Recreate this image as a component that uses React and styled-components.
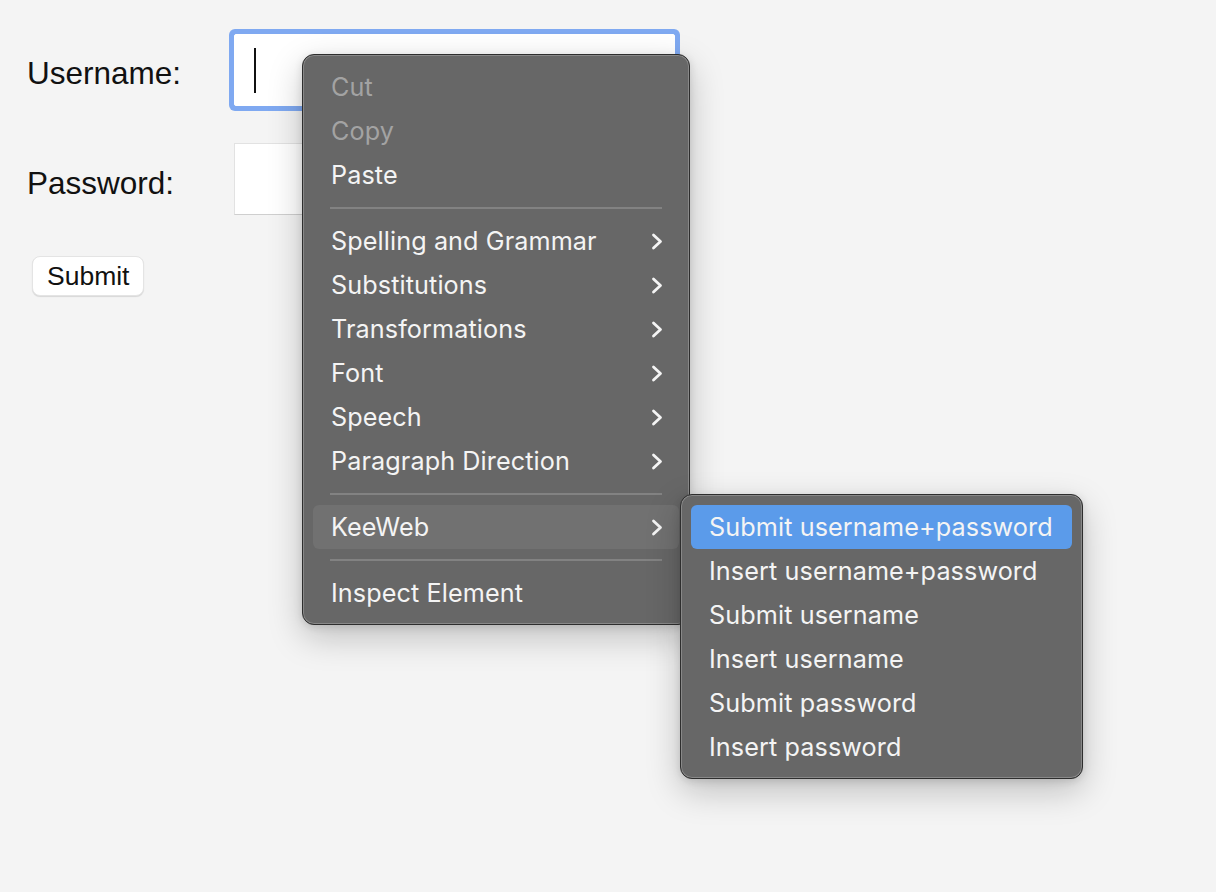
import React from 'react'
import styled, { createGlobalStyle } from 'styled-components'

const GlobalStyle = createGlobalStyle`
    html, body {
        margin: 0;
        padding: 0;
        background: #f4f4f4;
    }
    body {
        width: 1216px;
        height: 892px;
        overflow: hidden;
        font-family: "Liberation Sans", Arial, sans-serif;
    }
`

const Page = styled.div`
    position: relative;
    width: 1216px;
    height: 892px;
`

const Form = styled.div`
    display: flex;
    flex-direction: column;
    padding: 34px 0 0 27px;
`

const Row = styled.div`
    display: flex;
    align-items: center;
    margin-bottom: ${(p) => p.gap}px;
`

const Label = styled.div`
    width: 207px;
    font-size: 31.5px;
    color: #111;
    margin-top: ${(p) => p.shift || 0}px;
`

const Field = styled.div`
    display: flex;
    align-items: center;
    box-sizing: border-box;
    width: 441px;
    height: 72px;
    background: #fff;
    border: 1px solid ${(p) => (p.focused ? '#fff' : '#e2e2e2')};
    border-bottom-color: ${(p) => (p.focused ? '#fff' : '#cfcfcf')};
    border-radius: ${(p) => (p.focused ? '2px' : '0')};
    box-shadow: ${(p) => (p.focused ? '0 0 0 5px #7fa9f1' : 'none')};
    padding-left: 19px;
`

const Caret = styled.span`
    width: 2px;
    height: 45px;
    background: #111;
`

const SubmitButton = styled.button`
    align-self: flex-start;
    margin-left: 5px;
    height: 40px;
    padding: 0 14px;
    background: #fff;
    border: 1px solid #e4e4e4;
    border-radius: 8px;
    box-shadow: 0 1px 1px rgba(0, 0, 0, 0.12);
    font-family: "Liberation Sans", Arial, sans-serif;
    font-size: 26.5px;
    color: #111;
`

const Menu = styled.div`
    position: absolute;
    left: ${(p) => p.x}px;
    top: ${(p) => p.y}px;
    width: ${(p) => p.w}px;
    box-sizing: border-box;
    padding: 10px 10px 9px;
    background: #676767;
    border: 1px solid #2e2e2e;
    border-radius: 12px;
    box-shadow: inset 0 0 0 1px rgba(255, 255, 255, 0.22),
        0 12px 34px rgba(0, 0, 0, 0.22), 0 2px 8px rgba(0, 0, 0, 0.12);
    font-family: Inter, "Noto Sans", sans-serif;
`

const Item = styled.div`
    display: flex;
    align-items: center;
    justify-content: space-between;
    height: 44px;
    padding: 0 16px 0 18px;
    border-radius: 6px;
    font-size: 25.2px;
    letter-spacing: 0.1px;
    color: ${(p) => (p.disabled ? '#a3a3a3' : '#f4f4f4')};
    background: ${(p) =>
        p.selected ? '#5b9bea' : p.hover ? '#717171' : 'transparent'};
`

const Separator = styled.div`
    height: 22px;
    display: flex;
    align-items: center;
    padding: 0 17px 0 17px;
    &::after {
        content: '';
        flex: 1;
        height: 2px;
        background: #828282;
    }
`

function Chevron() {
    return (
        <svg width="12" height="17" viewBox="0 0 12 17">
            <polyline
                points="2.5,2 9.5,8.5 2.5,15"
                fill="none"
                stroke="#f4f4f4"
                strokeWidth="2.8"
                strokeLinecap="round"
                strokeLinejoin="round"
            />
        </svg>
    )
}

const mainItems = [
    { label: 'Cut', disabled: true },
    { label: 'Copy', disabled: true },
    { label: 'Paste' },
    { sep: true },
    { label: 'Spelling and Grammar', sub: true },
    { label: 'Substitutions', sub: true },
    { label: 'Transformations', sub: true },
    { label: 'Font', sub: true },
    { label: 'Speech', sub: true },
    { label: 'Paragraph Direction', sub: true },
    { sep: true },
    { label: 'KeeWeb', sub: true, hover: true },
    { sep: true },
    { label: 'Inspect Element' },
]

const keeWebItems = [
    'Submit username+password',
    'Insert username+password',
    'Submit username',
    'Insert username',
    'Submit password',
    'Insert password',
]

function App() {
    return (
        <Page>
            <GlobalStyle />
            <Form>
                <Row gap={37}>
                    <Label shift={6}>Username:</Label>
                    <Field focused>
                        <Caret />
                    </Field>
                </Row>
                <Row gap={41}>
                    <Label shift={9}>Password:</Label>
                    <Field />
                </Row>
                <SubmitButton>Submit</SubmitButton>
            </Form>

            <Menu x={302} y={54} w={388}>
                {mainItems.map((item, i) =>
                    item.sep ? (
                        <Separator key={i} />
                    ) : (
                        <Item
                            key={i}
                            disabled={item.disabled}
                            hover={item.hover}
                        >
                            {item.label}
                            {item.sub && <Chevron />}
                        </Item>
                    )
                )}
            </Menu>

            <Menu x={680} y={494} w={403}>
                {keeWebItems.map((label, i) => (
                    <Item key={label} selected={i === 0}>
                        {label}
                    </Item>
                ))}
            </Menu>
        </Page>
    )
}

export default App
